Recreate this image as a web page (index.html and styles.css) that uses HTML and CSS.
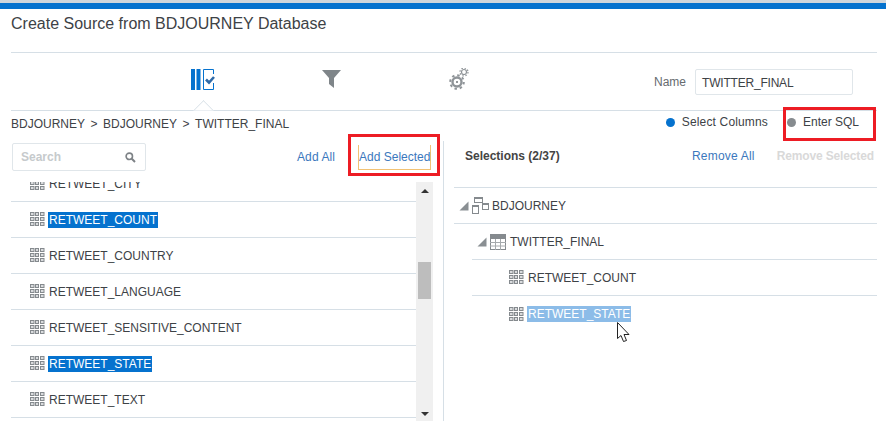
FILE: index.html
```html
<!DOCTYPE html>
<html lang="en">
<head>
    <meta charset="UTF-8">
    <title>Create Source</title>
    <link rel="stylesheet" href="styles.css">
</head>
<body>
    <svg width="0" height="0" class="defs">
        <symbol id="col" viewBox="0 0 15 15">
            <g fill="#d9dbdd" stroke="#858a8e" stroke-width="1">
                <rect x=".5" y=".5" width="3.500" height="3"/><rect x="5.500" y=".5" width="3" height="3"/><rect x="10.500" y=".5" width="3.500" height="3"/>
                <rect x=".5" y="5.500" width="3.500" height="3"/><rect x="5.500" y="5.500" width="3" height="3"/><rect x="10.500" y="5.500" width="3.500" height="3"/>
                <rect x=".5" y="10.500" width="3.500" height="3"/><rect x="5.500" y="10.500" width="3" height="3"/><rect x="10.500" y="10.500" width="3.500" height="3"/>
            </g>
        </symbol>
        <symbol id="tri" viewBox="0 0 10 10">
            <path d="M9.500 .5V9.500H.5Z" fill="#8a8f93"/>
        </symbol>
    </svg>

    <div class="topbar"></div>

    <div class="title"><h1>Create Source from BDJOURNEY Database</h1></div>

    <!-- Steps -->
    <div class="steps">
        <div class="step">
            <svg width="24" height="21" viewBox="0 0 24 21">
                <rect x="0" y="0" width="4" height="21" fill="#0572ce"/>
                <rect x="5.500" y="0" width="4" height="21" fill="#0572ce"/>
                <path d="M22.500 5V.5H12.500V20.500H22.500V14" fill="none" stroke="#0572ce"/>
                <path d="M15 10.500l3 3 5-5.500" fill="none" stroke="#2f6aa8" stroke-width="2.600"/>
            </svg>
        </div>
        <div class="step">
            <svg width="19" height="18" viewBox="0 0 19 18">
                <path d="M0 0H19L12 8V18L7 14V8Z" fill="#7f8589"/>
            </svg>
        </div>
        <div class="step">
            <svg width="20" height="22" viewBox="0 0 20 22">
                <g fill="none" stroke="#8f9498">
                    <circle cx="8" cy="14" r="4.500" stroke-width="2.400"/>
                    <circle cx="8" cy="14" r="6.800" stroke-width="2" stroke-dasharray="2.500 2.840"/>
                    <circle cx="15" cy="4" r="2.500" stroke-width="1.200"/>
                    <circle cx="15" cy="4" r="4" stroke-width="1.200" stroke-dasharray="1.500 1.640"/>
                </g>
                <circle cx="8" cy="14" r="1" fill="#6f7478"/>
            </svg>
        </div>
        <div class="name-field">
            <label class="name-label">Name</label>
            <div class="name-input">TWITTER_FINAL</div>
        </div>
        <div class="notch"></div>
    </div>

    <!-- Breadcrumb and mode -->
    <div class="crumbs">
        <div class="crumb-text">BDJOURNEY<span class="crumb-sep">&gt;</span>BDJOURNEY<span class="crumb-sep">&gt;</span>TWITTER_FINAL</div>
        <div class="modes">
            <span class="dot dot-on"></span><span class="mode-text mode-first">Select Columns</span>
            <span class="dot dot-off"></span><span class="mode-text">Enter SQL</span>
        </div>
    </div>

    <div class="panes">
        <!-- Available columns -->
        <div class="left">
            <div class="left-tools">
                <div class="search">
                    <span>Search</span>
                    <svg width="11" height="11" viewBox="0 0 11 11">
                        <circle cx="4.300" cy="4.300" r="3.200" fill="none" stroke="#7d8286" stroke-width="1.600"/>
                        <path d="M6.800 6.800L10 10" stroke="#7d8286" stroke-width="2"/>
                    </svg>
                </div>
                <a class="link add-all">Add All</a>
                <a class="link add-selected">Add Selected</a>
            </div>
            <div class="list-wrap">
                <div class="list">
                    <div class="row first"><svg class="ico"><use href="#col"/></svg><span>RETWEET_CITY</span></div>
                    <div class="row"><svg class="ico"><use href="#col"/></svg><span class="sel">RETWEET_COUNT</span></div>
                    <div class="row"><svg class="ico"><use href="#col"/></svg><span>RETWEET_COUNTRY</span></div>
                    <div class="row"><svg class="ico"><use href="#col"/></svg><span>RETWEET_LANGUAGE</span></div>
                    <div class="row"><svg class="ico"><use href="#col"/></svg><span>RETWEET_SENSITIVE_CONTENT</span></div>
                    <div class="row"><svg class="ico"><use href="#col"/></svg><span class="sel">RETWEET_STATE</span></div>
                    <div class="row"><svg class="ico"><use href="#col"/></svg><span>RETWEET_TEXT</span></div>
                </div>
                <div class="scrollbar">
                    <div class="arrow-up"></div>
                    <div class="thumb"></div>
                    <div class="arrow-down"></div>
                </div>
            </div>
        </div>

        <!-- Selections -->
        <div class="right">
            <div class="right-tools">
                <strong class="sel-title">Selections (2/37)</strong>
                <a class="link remove-all">Remove All</a>
                <a class="remove-selected">Remove Selected</a>
            </div>
            <div class="tree">
                <div class="node">
                    <svg class="tri"><use href="#tri"/></svg>
                    <svg class="node-ico" width="17" height="18" viewBox="0 0 17 18">
                        <g fill="#fff" stroke="#858a8e">
                            <rect x="2.500" y=".5" width="8" height="5"/>
                            <rect x="10.500" y="6.500" width="6" height="6"/>
                            <rect x=".5" y="8.500" width="6" height="8"/>
                        </g>
                        <g fill="#858a8e">
                            <rect x="2" y="0" width="9" height="2"/>
                            <rect x="10" y="6" width="7" height="2"/>
                            <rect x="0" y="8" width="7" height="2"/>
                        </g>
                    </svg>
                    <span>BDJOURNEY</span>
                </div>
                <div class="node level-1">
                    <svg class="tri"><use href="#tri"/></svg>
                    <svg class="node-ico table-ico" width="16" height="16" viewBox="0 0 16 16">
                        <rect x=".5" y=".5" width="15" height="15" fill="#fff" stroke="#858a8e"/>
                        <rect x="0" y="0" width="16" height="5" fill="#858a8e"/>
                        <path d="M5.500 5V16M10.500 5V16M0 8.500H16M0 12H16" stroke="#a6aaad"/>
                    </svg>
                    <span>TWITTER_FINAL</span>
                </div>
                <div class="node level-2">
                    <svg class="ico"><use href="#col"/></svg><span>RETWEET_COUNT</span>
                </div>
                <div class="node level-2 last">
                    <svg class="ico"><use href="#col"/></svg><span class="sel-soft">RETWEET_STATE</span>
                </div>
            </div>
        </div>
    </div>

    <!-- Screenshot annotations -->
    <div class="mark mark-add"></div>
    <div class="mark mark-sql"></div>
    <svg class="cursor" width="14" height="21" viewBox="0 0 14 21">
        <path d="M.5 .5V16.500L4 13.500L6.500 19.500L9.500 18.500L7 12.500H12Z" fill="#fff" stroke="#222" stroke-linejoin="round"/>
    </svg>
</body>
</html>
```

FILE: styles.css
```css
* {
    margin: 0;
    padding: 0;
    box-sizing: border-box;
}

body {
    position: relative;
    width: 886px;
    height: 429px;
    overflow: hidden;
    background: #fff;
    font-family: "Liberation Sans", Arial, sans-serif;
    font-size: 12px;
    color: #3d4246;
}

.defs {
    position: absolute;
}

.topbar {
    height: 9px;
    background: #0572ce;
    border-top: 3px solid #cfd6dc;
}

.title {
    height: 44px;
    margin: 0 9px 0 11px;
    padding-top: 6px;
    border-bottom: 1px solid #d6dfe6;
}

.title h1 {
    font-size: 16px;
    font-weight: normal;
    line-height: 18px;
    color: #3d4246;
}

/* Steps */
.steps {
    position: relative;
    display: flex;
    align-items: center;
    height: 58px;
    margin: 0 9px 0 11px;
    padding-left: 128px;
    border-bottom: 1px solid #d6dfe6;
}

.step {
    display: flex;
    justify-content: center;
    width: 128px;
    margin-bottom: 5px;
}

.name-field {
    display: flex;
    align-items: center;
    margin-left: 131px;
}

.name-label {
    width: 41px;
    color: #666b6f;
}

.name-input {
    width: 158px;
    height: 26px;
    padding-left: 6px;
    line-height: 26px;
    letter-spacing: -0.2px;
    border: 1px solid #e0e6ea;
    border-radius: 2px;
}

.notch {
    position: absolute;
    left: 185px;
    bottom: -8px;
    width: 15px;
    height: 15px;
    background: #fff;
    border-left: 1px solid #d6dfe6;
    border-top: 1px solid #d6dfe6;
    transform: rotate(45deg);
    clip-path: polygon(0 0, 100% 0, 0 100%);
}

/* Breadcrumb */
.crumbs {
    display: flex;
    justify-content: space-between;
    height: 30px;
    padding: 6px 27px 0 11px;
    line-height: 14px;
}

.crumb-sep {
    margin: 0 5.5px;
}

.modes {
    display: flex;
    align-items: center;
    height: 12px;
    margin-top: -1px;
}

.dot {
    width: 9px;
    height: 9px;
    border-radius: 50%;
    margin-right: 7px;
}

.dot-on {
    background: #0572ce;
}

.dot-off {
    background: #868b8f;
}

.mode-first {
    margin-right: 19px;
    letter-spacing: 0.15px;
}

/* Panes */
.panes {
    display: flex;
    height: 288px;
}

.left {
    width: 444px;
    height: 280px;
    padding-left: 11px;
    padding-top: 2px;
    border-right: 1px solid #d6dfe6;
}

.left-tools {
    display: flex;
    align-items: center;
    height: 28px;
}

.search {
    display: flex;
    align-items: center;
    justify-content: space-between;
    width: 134px;
    height: 28px;
    margin-left: 1px;
    padding: 0 9px 0 8px;
    border: 1px solid #e0e6ea;
    border-radius: 2px;
    color: #c6cacc;
    font-weight: bold;
}

.link {
    color: #3b78bd;
}

.add-all {
    margin-left: 151px;
    letter-spacing: 0.1px;
}

.add-selected {
    margin-left: 23px;
    padding: 5px 0;
    border: 1px solid #f2c274;
    border-top: 0;
}

.list-wrap {
    display: flex;
    margin-top: 11px;
    height: 239px;
    overflow: hidden;
}

.list {
    width: 405px;
}

.row {
    display: flex;
    align-items: center;
    height: 36px;
    padding-left: 19px;
    border-bottom: 1px solid #d6dfe6;
}

.row.first {
    margin-top: -16px;
}

.ico {
    flex: none;
    width: 15px;
    height: 15px;
    margin-right: 4px;
}

.sel {
    margin-left: -1px;
    padding: 1px;
    line-height: 14px;
    color: #fff;
    background: #0572ce;
}

.scrollbar {
    display: flex;
    flex-direction: column;
    align-items: center;
    width: 17px;
    padding: 7px 2px 5px;
    background: #f0f0f0;
}

.arrow-up {
    width: 0;
    height: 0;
    border: 4px solid transparent;
    border-top: 0;
    border-bottom: 4px solid #333;
}

.thumb {
    width: 13px;
    height: 37px;
    margin-top: 69px;
    background: #bdbdbd;
}

.arrow-down {
    width: 0;
    height: 0;
    margin-top: auto;
    border: 4px solid transparent;
    border-bottom: 0;
    border-top: 4px solid #333;
}

.right {
    width: 433px;
    padding-left: 10px;
}

.right-tools {
    display: flex;
    align-items: flex-start;
    height: 47px;
    padding-left: 11px;
    padding-top: 8px;
    line-height: 14px;
    border-bottom: 1px solid #d6dfe6;
}

.sel-title {
    width: 227px;
    color: #444;
}

.remove-all {
    letter-spacing: 0.2px;
}

.remove-selected {
    margin-left: 22px;
    letter-spacing: -0.15px;
    color: #d9d9d9;
    font-weight: bold;
}

.node {
    display: flex;
    align-items: center;
    height: 36px;
    padding-left: 5px;
    border-bottom: 1px solid #d6dfe6;
}

.tri {
    flex: none;
    width: 10px;
    height: 10px;
    margin-right: 3px;
    margin-top: 1px;
}

.node-ico {
    flex: none;
    margin-right: 3px;
}

.table-ico {
    margin-right: 4px;
}

.level-1,
.level-2 {
    margin-left: 18px;
}

.level-1 {
    padding-left: 5px;
}

.level-2 {
    padding-left: 37px;
}

.last {
    border-bottom: 0;
}

.sel-soft {
    margin-left: -1px;
    padding: 1px;
    line-height: 14px;
    color: #fff;
    background: #8cbce8;
}

/* Annotations */
.mark {
    position: absolute;
    border: 3px solid #ed1c24;
}

.mark-add {
    left: 348px;
    top: 134px;
    width: 92px;
    height: 42px;
}

.mark-sql {
    left: 783px;
    top: 107px;
    width: 93px;
    height: 34px;
}

.cursor {
    position: absolute;
    left: 617px;
    top: 322px;
}
```
